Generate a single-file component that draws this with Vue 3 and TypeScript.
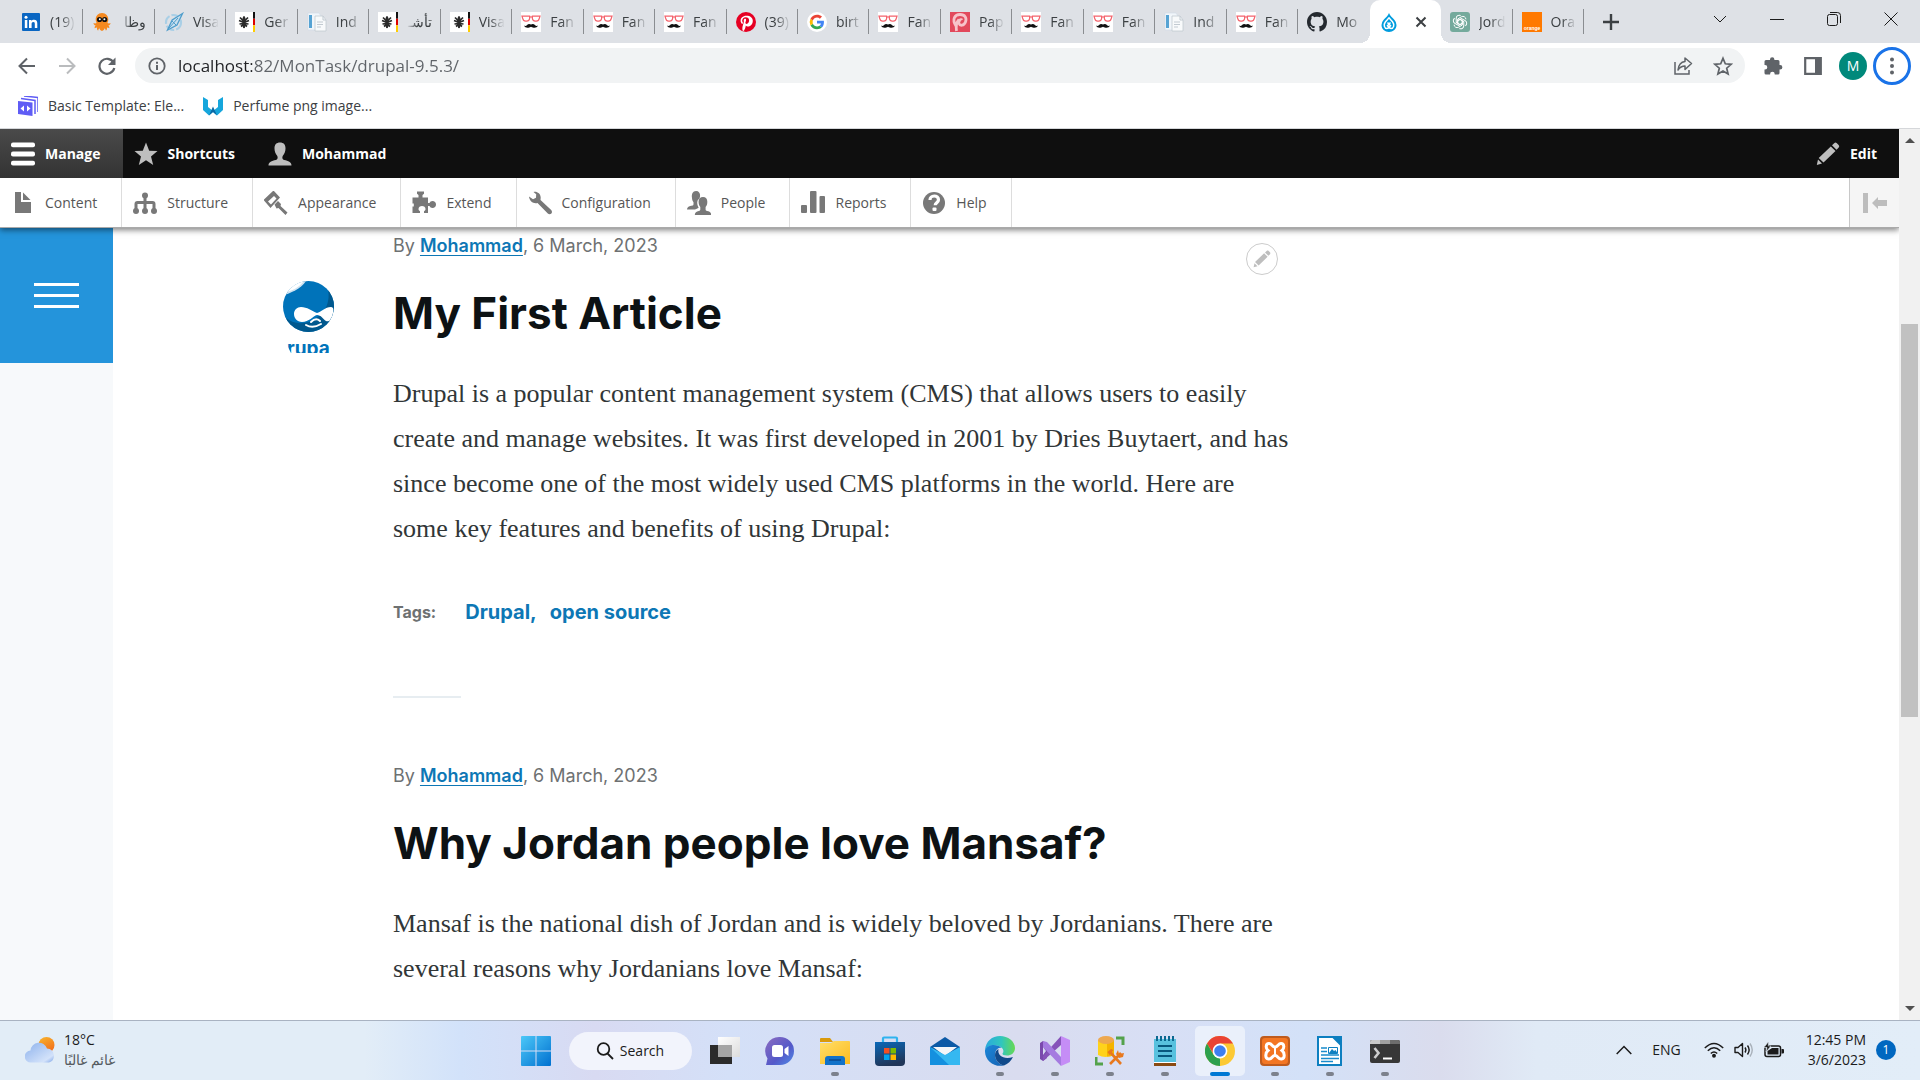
<script setup lang="ts">
import { ref } from 'vue'

interface Tab {
  icon: string
  label: string
  rtl?: boolean
  active?: boolean
}

interface MenuItem {
  icon: string
  label: string
}

interface TaskApp {
  icon: string
  label: string
  state?: 'open' | 'current'
}

interface Article {
  author: string
  date: string
  title: string
  lines: string[]
  tags: string[]
  avatar: boolean
}

const url = ref('localhost:82/MonTask/drupal-9.5.3/')

const tabs: Tab[] = [
  { icon: 'linkedin', label: '(19)' },
  { icon: 'octopus', label: 'وظا', rtl: true },
  { icon: 'compass', label: 'Visa' },
  { icon: 'german', label: 'Ger' },
  { icon: 'document', label: 'Ind' },
  { icon: 'german', label: 'تأشـ', rtl: true },
  { icon: 'german', label: 'Visa' },
  { icon: 'fancy', label: 'Fan' },
  { icon: 'fancy', label: 'Fan' },
  { icon: 'fancy', label: 'Fan' },
  { icon: 'pinterest', label: '(39)' },
  { icon: 'google', label: 'birt' },
  { icon: 'fancy', label: 'Fan' },
  { icon: 'paper', label: 'Pap' },
  { icon: 'fancy', label: 'Fan' },
  { icon: 'fancy', label: 'Fan' },
  { icon: 'document', label: 'Ind' },
  { icon: 'fancy', label: 'Fan' },
  { icon: 'github', label: 'Mo' },
  { icon: 'drop', label: '', active: true },
  { icon: 'gpt', label: 'Jord' },
  { icon: 'orange', label: 'Ora' },
]

const menu: MenuItem[] = [
  { icon: 'content', label: 'Content' },
  { icon: 'structure', label: 'Structure' },
  { icon: 'appearance', label: 'Appearance' },
  { icon: 'extend', label: 'Extend' },
  { icon: 'config', label: 'Configuration' },
  { icon: 'people', label: 'People' },
  { icon: 'reports', label: 'Reports' },
  { icon: 'help', label: 'Help' },
]

const apps: TaskApp[] = [
  { icon: 'taskview', label: 'Task view' },
  { icon: 'chat', label: 'Chat' },
  { icon: 'explorer', label: 'File Explorer', state: 'open' },
  { icon: 'store', label: 'Store' },
  { icon: 'mail', label: 'Mail' },
  { icon: 'edge', label: 'Edge', state: 'open' },
  { icon: 'vs', label: 'Visual Studio', state: 'open' },
  { icon: 'sql', label: 'Database tools', state: 'open' },
  { icon: 'notepad', label: 'Notepad', state: 'open' },
  { icon: 'chrome', label: 'Chrome', state: 'current' },
  { icon: 'xampp', label: 'XAMPP', state: 'open' },
  { icon: 'writer', label: 'Writer', state: 'open' },
  { icon: 'terminal', label: 'Terminal', state: 'open' },
]

const articles: Article[] = [
  {
    author: 'Mohammad',
    date: '6 March, 2023',
    title: 'My First Article',
    lines: [
      'Drupal is a popular content management system (CMS) that allows users to easily',
      'create and manage websites. It was first developed in 2001 by Dries Buytaert, and has',
      'since become one of the most widely used CMS platforms in the world. Here are',
      'some key features and benefits of using Drupal:',
    ],
    tags: ['Drupal', 'open source'],
    avatar: true,
  },
  {
    author: 'Mohammad',
    date: '6 March, 2023',
    title: 'Why Jordan people love Mansaf?',
    lines: [
      'Mansaf is the national dish of Jordan and is widely beloved by Jordanians. There are',
      'several reasons why Jordanians love Mansaf:',
    ],
    tags: [],
    avatar: false,
  },
]

// Favicons, drawn on a 20 x 20 grid
const favicons: Record<string, string> = {
  linkedin:
    '<rect width="18" height="18" x="1" y="1" rx="1" fill="#0a66c2"/><circle cx="5" cy="5.2" r="1.5" fill="#fff"/><path d="M3.8 8h2.5v8H3.8zM8 8h2.4v1.1c.5-.8 1.400-1.300 2.600-1.300 2.600 0 3.300 1.600 3.300 4V16h-2.500v-3.900c0-1.100-.2-2-1.400-2-1.300 0-1.800.9-1.800 2.100V16H8z" fill="#fff"/>',
  octopus:
    '<path d="M10 1C6 1 3.600 4 3.700 7.500c0 1.500.5 2.500.9 3.500-1 .6-2.300.5-3.100 0 0 1.500 1 2.300 2.200 2.300-1 .8-1.200 1.900-1 3 .6-.6 1.600-.8 2.400-.9-.4 1.400.2 2.600 1.200 3.200 0-1 .5-1.800 1.200-2.300.2 1.300 1.100 2.300 2.500 2.700 1.400-.4 2.300-1.400 2.500-2.700.7.5 1.200 1.300 1.200 2.300 1-.6 1.600-1.800 1.200-3.200.8.1 1.800.3 2.400.9.2-1.100 0-2.200-1-3 1.200 0 2.200-.8 2.200-2.300-.8.5-2.100.6-3.100 0 .4-1 .9-2 .9-3.500C16.400 4 14 1 10 1z" fill="#f5891f"/><circle cx="7.500" cy="7.500" r="2.600" fill="#111"/><circle cx="12.700" cy="7.500" r="2.600" fill="#111"/><circle cx="7.800" cy="7.300" r="1" fill="#fff"/><circle cx="12.400" cy="7.300" r="1" fill="#fff"/>',
  compass:
    '<circle cx="9.500" cy="10.500" r="7.500" fill="none" stroke="#a9cfe6" stroke-width="2.200" stroke-dasharray="9 2"/><path d="M19 1 12.500 14.500 3 18.500 7.500 7z" fill="#c9e0ee"/><path d="M18.500 1.500 8.200 8 3.500 18 13 13z" fill="none" stroke="#4f9dcb" stroke-width="1.300"/><path d="m5 16 9-10M8 9l4 4" stroke="#4f9dcb" stroke-width="1"/>',
  german:
    '<path fill="#fff" d="M0 0h20v20H0z"/><path fill="#111" d="M18 0h2v6.700h-2z"/><path fill="#d00" d="M18 6.700h2v6.600h-2z"/><path fill="#fc0" d="M18 13.300h2V20h-2z"/><path d="M9 4.500V16M9 9.500 5 5.500M9 10.500 4 8.500M9 11.500l-4.500.5M9 12l-3 2.500M9 9.500l4-4M9 10.500l5-2M9 11.500l4.500.5M9 12l3 2.500" stroke="#2a2a2a" stroke-width="1.700"/><path d="M7.500 6 9 4l1.500 2v8L9 16.500 7.500 14z" fill="#2a2a2a"/>',
  document:
    '<path d="M1 1h11l2 3v14H1z" fill="#f1f6fa" stroke="#d3dde6" stroke-width=".7"/><path d="M2 3h3v13H2z" fill="#56a3d3"/><path d="M8 4h8l3 4v11H8z" fill="#f8fafb" stroke="#c2cad1" stroke-width=".8"/><path d="M10 10h6M10 12.500h6M10 15h4M16 4v4h3" fill="none" stroke="#c2cad1"/>',
  fancy:
    '<path fill="#fff" d="M0 0h20v20H0z"/><path d="M1 4.200h7.600v2.500a3 3 0 0 1-3 2.400H4.800A3 3 0 0 1 1.800 6.700zM11.400 4.200H19l-.8 2.500a3 3 0 0 1-3 2.400h-.8a3 3 0 0 1-3-2.400zM8.600 5.300q1.400-1 2.800 0" fill="none" stroke="#f4636c" stroke-width="1.200"/><path d="M10 12.600c-1.400-1.100-3-.7-3.900.4-.8 1-2.100 1.200-3.100.6.700 1.800 2.500 2.300 4.300 2.100 1.300-.1 2.300-.5 2.700-.9.400.4 1.400.8 2.700.9 1.800.2 3.600-.3 4.300-2.100-1 .6-2.300.4-3.100-.6-.9-1.100-2.500-1.500-3.900-.4z" fill="#111"/>',
  pinterest:
    '<circle cx="10" cy="10" r="10" fill="#e60023"/><path d="M10.400 3.700c-3.700 0-5.800 2.400-5.800 5 0 1.200.6 2.700 1.700 3.200.2.100.3 0 .3-.1l.3-1.100c0-.1 0-.2-.1-.3-.4-.4-.6-1.100-.6-1.800 0-1.700 1.300-3.400 3.600-3.400 1.900 0 3.300 1.300 3.300 3.100 0 2.100-1.100 3.600-2.500 3.600-.8 0-1.400-.6-1.200-1.400.2-.9.700-1.900.7-2.600 0-1.600-2.400-1.400-2.400.8 0 .7.200 1.100.2 1.100L6.500 14.700c-.3 1.400 0 3.400.1 3.700.6.300 1.200.5 1.200.5.300-.5 1.200-2 1.500-3.200l.6-2.200c.3.600 1.200 1.100 2.100 1.100 2.800 0 4.800-2.600 4.800-5.800 0-3-2.500-5.100-6.400-5.100z" fill="#fff"/>',
  google:
    '<circle cx="10" cy="10" r="10" fill="#fff"/><path d="M16.900 8.800H10v2.700h4a3.700 3.700 0 0 1-1.500 2.300l2.300 1.800c1.500-1.400 2.400-3.400 2.100-6.800z" fill="#4285f4"/><path d="M10 17.200c1.900 0 3.600-.6 4.800-1.600l-2.300-1.800c-1.800 1.200-5.500.9-6.600-2.100L3.500 13.500c1.200 2.300 3.700 3.700 6.500 3.700z" fill="#34a853"/><path d="M5.900 11.700a4.600 4.600 0 0 1 0-3.100L3.500 6.700a7.300 7.300 0 0 0 0 6.800z" fill="#fbbc05"/><path d="M10 5.600c1.100 0 2.100.4 2.900 1.100L15 4.600C11.500 1.400 5.800 2.200 3.500 6.700l2.400 1.900C6.500 6.800 8.100 5.600 10 5.600z" fill="#ea4335"/>',
  paper:
    '<path fill="#e2495c" d="M0 0h20v20H0z"/><path d="M6.500 19c-1-7 .6-9.500 2.500-11.500M6 14C1.500 7 5 2.500 10 2.500S17 6 15.500 10s-5.500 4-6.500 1.500S11 6.500 12 8" fill="none" stroke="#f7c3ca" stroke-width="2.800"/>',
  github:
    '<path transform="scale(1.250)" d="M8 0C3.580 0 0 3.580 0 8c0 3.540 2.290 6.530 5.470 7.590.4.070.55-.17.55-.38 0-.19-.01-.82-.01-1.490-2.010.37-2.530-.49-2.690-.94-.09-.23-.48-.94-.82-1.130-.28-.15-.68-.52-.01-.53.63-.01 1.080.58 1.230.82.720 1.210 1.870.87 2.330.66.070-.52.280-.87.510-1.070-1.780-.2-3.640-.89-3.640-3.950 0-.87.310-1.590.820-2.150-.08-.2-.36-1.020.08-2.120 0 0 .67-.21 2.200.82.640-.18 1.320-.27 2-.27s1.360.09 2 .27c1.530-1.040 2.200-.82 2.200-.82.440 1.100.16 1.920.08 2.120.510.560.820 1.270.820 2.150 0 3.070-1.870 3.750-3.650 3.950.290.250.540.730.540 1.480 0 1.070-.01 1.930-.01 2.200 0 .21.150.460.550.380A8.010 8.010 0 0 0 16 8c0-4.420-3.580-8-8-8z" fill="#24292f"/>',
  drop:
    '<path d="M10 1C11 3.800 13.500 5.800 15.500 8a7.800 7.800 0 0 1 2 5c0 4-3.400 7-7.500 7s-7.500-3-7.500-7a7.800 7.800 0 0 1 2-5C6.500 5.800 9 3.800 10 1z" fill="#009cde"/><path d="M10 5.500C11 7.500 12.500 8.500 13.500 9.800 16 13 14.500 16.500 12 16.500c-1.200 0-2.300-1.500-3.500-2.700L11.500 10.500M10 5.500c-1 2-2.500 3-3.500 4.300C4 13 5.500 16.500 8 16.500c1.200 0 2.300-1.500 3.500-2.700L8.500 10.500" fill="none" stroke="#fff" stroke-width="1.500"/>',
  gpt:
    '<rect width="20" height="20" rx="3" fill="#74aa9c"/><g fill="none" stroke="#fff" stroke-width="1"><path id="petal" d="M10 7.400 12.300 8.700V13L8.600 15.200a3 3 0 0 1-4.500-2.500"/><use href="#petal" transform="rotate(60 10 10)"/><use href="#petal" transform="rotate(120 10 10)"/><use href="#petal" transform="rotate(180 10 10)"/><use href="#petal" transform="rotate(240 10 10)"/><use href="#petal" transform="rotate(300 10 10)"/></g>',
  orange:
    '<path fill="#ff7900" d="M0 0h20v20H0z"/><text x="10" y="18" text-anchor="middle" font-family="Liberation Sans, sans-serif" font-weight="700" font-size="5" fill="#fff">orange</text>',
}

// Admin menu glyphs, drawn on a 24 x 24 grid
const glyphs: Record<string, string> = {
  content: '<path d="M4 1h6v10h10v11H4z"/><path d="M12 1.500 19.500 9H12z"/>',
  structure:
    '<circle cx="12" cy="4.500" r="3"/><circle cx="3" cy="20" r="3"/><circle cx="12" cy="20" r="3"/><circle cx="21" cy="20" r="3"/><path d="M12 5v14M3 19v-6q0-1.500 1.500-1.500h15Q21 11.500 21 13v6" fill="none" stroke="currentColor" stroke-width="3"/>',
  appearance:
    '<path d="M9.500-.5 16 6.500 6.500 17-.5 9zM10 5 4 10.500 7 13.500 12.500 7.500z" fill-rule="evenodd"/><path d="m10.500 13.500 3.500-3.500 3 3-.5 2 7 6.500-2 2.500-7-7-2 .5z"/>',
  extend:
    '<path d="M5 .5h7v2.200L10.500 4v2.500H16V12h1.500c.5-1.200 1.500-2 3-2 2 0 3.500 1.500 3.500 3.500S22.500 17 20.500 17c-1.500 0-2.500-.8-3-2H16v7h-4v-1.800c1-.4 1.500-1.200 1.500-2.200 0-1.800-1.500-3-3.500-3s-3.500 1.200-3.500 3c0 1 .5 1.800 1.500 2.200V22H.5v-6.500h1.300v-3H.5v-6H6.500V4L5 2.700z"/>',
  config:
    '<path d="M1 5.500 5 8.200l3-1.500.2-3.400L5.500 1C9 .2 12.500 2.500 12.700 6.500L12.500 9l10.700 10c1 1.200 1 2.500.2 3.500-1 1-2.500 1-3.600 0L9.500 12c-4 1-8-1.500-8.500-6.500z"/>',
  people:
    '<path d="M9 0c2.800 0 4.300 2 4.100 5-.1 1-.4 1.500-.6 2.500-1.800.9-2.500 3-2.200 5.300.2 1.700.7 2.600 1.400 3.800-.5.7-2 1.300-3.700 1.900H0c0-2.500 2-3.300 5.500-4 .8-.2 1-.8 1-1.600v-1.600C5.500 10 5 8.500 5 7c-.6-3.800.8-7 4-7z"/><path d="M16 6c3 0 4.500 2 4.300 5.200 0 2-.6 3.500-1.700 4.800v2.500c0 .8.500 1.200 1.500 1.500 2.500.5 4.200 1.500 4.200 4H7.800c0-2.500 1.700-3.500 4-4 1-.3 1.500-.7 1.500-1.500V16c-1-1.300-1.600-2.800-1.700-4.800C11.400 8 13 6 16 6z"/>',
  reports:
    '<rect x="0" y="14" width="6" height="8" rx="1"/><rect x="9" y="0" width="6.500" height="22" rx="1"/><rect x="18.500" y="5" width="5.500" height="17" rx="1"/>',
  help: '<circle cx="12" cy="12" r="11"/><path d="M8 9c0-2.400 1.700-4 4.200-4s4.300 1.500 4.300 3.700c0 3-3.300 3-3.300 5.500" fill="none" stroke="#fff" stroke-width="3.200"/><rect x="10.500" y="16.500" width="4" height="3.500" rx="1" fill="#fff"/>',
  star: '<path d="m12 .5 3.200 8.200 8.300.4-6.500 5.300 2.200 8.600L12 18.200 4.800 23 7 14.400.5 9.100l8.300-.4z"/>',
  user: '<path d="M12 .5c3.500 0 5.600 2 5.500 6 0 3-1 5-2.800 7.500-.8 1.500-.3 3.500 1.500 4 4 .8 7.300 2 7.300 5.500H.5C.5 20 3.800 18.800 7.800 18c1.800-.5 2.300-2.500 1.500-4C7.500 11.500 6.500 9.500 6.500 6.500c-.1-4 2-6 5.500-6z"/>',
  pencil:
    '<path d="M18.200 1.200c.8-.8 1.600-.9 2.400-.1l2 2c.8.900.8 1.600.1 2.400l-2.200 2.300-4.500-4.500z"/><path d="m14.800 4.400 4.700 4.700L7.500 20.500l-4.800-4.600zM2 17.500l4 4L.8 23z"/>',
}

// Taskbar pictures, drawn on a 30 x 30 grid
const appIcons: Record<string, string> = {
  taskview:
    '<defs><linearGradient id="tvw" x2="1" y2="1"><stop stop-color="#fff"/><stop offset="1" stop-color="#dcdcdc"/></linearGradient></defs><path d="M0 9h22v19H0z" fill="#2b2b2b"/><path d="M8 1h22v20H8z" fill="url(#tvw)"/><path d="M8 9h14v12H8z" fill="#a5a5a5"/>',
  chat:
    '<defs><linearGradient id="cht" x2="1" y2="1"><stop stop-color="#8d6cc0"/><stop offset=".6" stop-color="#5459c9"/><stop offset="1" stop-color="#4f8ce8"/></linearGradient></defs><path d="M15 1a14 14 0 1 1 0 28H1l1.500-6.500A14 14 0 0 1 15 1z" fill="url(#cht)"/><rect x="7" y="9" width="11" height="12" rx="2.500" fill="#fff"/><path d="m19.500 13 4-3v10l-4-3z" fill="#fff"/>',
  explorer:
    '<defs><linearGradient id="exp" x2="1" y2="1"><stop stop-color="#ffdf6a"/><stop offset="1" stop-color="#fdbb1f"/></linearGradient></defs><path d="M1 2h9l3 4H0V3q0-1 1-1z" fill="#d99a0c"/><path d="M0 7h11l3-2h15q1 0 1 1v22H0z" fill="url(#exp)"/><path d="M5 29v-6q0-3 3-3h14q3 0 3 3v6z" fill="#1272c8"/><path d="M9 24h12" stroke="#0b4a8e" stroke-width="1.500"/>',
  store:
    '<defs><linearGradient id="sto" y2="1" x2=".3"><stop stop-color="#0a68b8"/><stop offset="1" stop-color="#203659"/></linearGradient></defs><path d="M8 7V2.500Q8 1.500 9 1.500h12q1 0 1 1V7" fill="none" stroke="#2fb3ef" stroke-width="2.200"/><path d="M0 6h30v20q0 4-4 4H4q-4 0-4-4z" fill="url(#sto)"/><path d="M9 12h5.500v5.500H9z" fill="#f25022"/><path d="M15.500 12H21v5.500h-5.500z" fill="#7fba00"/><path d="M9 18.500h5.500V24H9z" fill="#00a4ef"/><path d="M15.500 18.500H21V24h-5.500z" fill="#ffb900"/>',
  mail:
    '<path d="M0 11 15 1l15 10v10H0z" fill="#0c5aa6"/><path d="M3 11h24L15 20z" fill="#f4f6f8"/><path d="M0 11 15 19 30 11v18H0z" fill="#35b8f1"/><path d="M0 11 19 29H0z" fill="#1490df"/>',
  edge:
    '<defs><linearGradient id="edg" x2="1"><stop stop-color="#2aa8de"/><stop offset=".55" stop-color="#30c6bd"/><stop offset="1" stop-color="#67d951"/></linearGradient><linearGradient id="edb" y2="1"><stop stop-color="#1b86d8"/><stop offset="1" stop-color="#1763b4"/></linearGradient></defs><path d="M0 14C1 5 7 0 15 0s15 5.500 15 12c0 5-4 7.500-8 7.500-3 0-5-1-4.500-2 1.500-1.500 1-4-.5-5.500C13 8 3 8 0 14z" fill="url(#edg)"/><path d="M0 14c3-6.500 12-6 16.500-2.500-4 0-6.500 3-6.500 7.500 0 5 4 9.500 9 10.500C8 31.500-.5 24 0 14z" fill="url(#edb)"/><path d="M10 19c0-3 1.500-5 3.500-6-1.500 7 6 11 14.500 8-2 4-5 7-9 8.500-5-1-9-5.500-9-10.500z" fill="#114a8b"/>',
  vs:
    '<path d="M21 0 30 4v22l-9 4z" fill="#c58df6"/><path d="m0 7 3-2 4 3v14l-4 3-3-2z" fill="#7a49ad"/><path d="M3 25 21 9V0L3 20z" fill="#8653b9"/><path d="M3 5v6l18 19v-9L7 6z" fill="#a57be0"/><path d="M3 11l3 4-3 4z" fill="#d6daf2"/>',
  sql:
    '<path d="M3 4v15q7 4 16 0V4z" fill="#ffd21c"/><path d="M12 4h7v15q-3 1.500-7 1.600z" fill="#f5b400"/><ellipse cx="11" cy="4" rx="8" ry="4" fill="#eda850"/><path d="M21 2h7v7M1 21v7h7" fill="none" stroke="#54a24c" stroke-width="3"/><path d="m15 16 11 12M26 17 15 28" stroke="#e8781e" stroke-width="2.600"/><path d="m12.500 16 3.500-3 2.500 1-4 5zM23 14l1 4 5-1-1 4-4 1-3-4z" fill="#e8781e"/>',
  notepad:
    '<path d="M4 3h22v24H4z" fill="#58c1de"/><path d="M4 27h22v3H4z" fill="#8a4a12"/><path d="M4 26h22v1H4z" fill="#fff"/><path d="M8 10h14M8 15h14M8 20h14" stroke="#08587e" stroke-width="2"/><path d="M7 0v5M11 0v5M15 0v5M19 0v5M23 0v5" stroke="#0c6890" stroke-width="2"/>',
  chrome:
    '<circle cx="15" cy="15" r="15" fill="#fcc934"/><path d="M2 7.500A15 15 0 0 1 28 7.500H15L9 18.700z" fill="#ea4335"/><path d="M2 7.500 8.500 18.700 15 22.500 15 30A15 15 0 0 1 2 7.500z" fill="#2da04e"/><path d="M15 30l6.500-11.300L21 15h-6z" fill="#fcc934"/><circle cx="15" cy="15" r="7.400" fill="#fff"/><circle cx="15" cy="15" r="5.800" fill="#3f7ff0"/>',
  xampp:
    '<rect width="30" height="30" rx="4" fill="#bf5b1d"/><rect x="2" y="2" width="26" height="26" rx="3" fill="#f37623"/><path d="M9 7.500c-3.500 0-3.500 5-1 7-2.500 2-3.500 8 .5 8.500 3.500.5 3.500-3.500 6.500-3.500s3 4 6.500 3.500c4-.5 3-6.500.5-8.500 2.500-2 2.500-7-1-7-3 0-3 3.500-6 3.500s-3-3.500-6-3.500z" fill="none" stroke="#fff" stroke-width="3"/><path d="M15 11v9" stroke="#fff" stroke-width="2"/>',
  writer:
    '<path d="M3 1h15l8 8v20H3z" fill="#fff" stroke="#0d7fc0" stroke-width="2"/><path d="M17 0h10v10z" fill="#0d7fc0"/><path d="M6 12h6M6 15.500h6M6 19h18M6 22.500h18M6 25.500h12" stroke="#1a8ccc" stroke-width="1.500"/><path d="M13.500 11.500h9v6h-9z" fill="#fff" stroke="#0d7fc0"/><path d="m14 17 3-4 2 2 1.500-1 2 3z" fill="#0d7fc0"/>',
  terminal:
    '<path d="M0 6q0-2 2-2h26q2 0 2 2v19q0 2-2 2H2q-2 0-2-2z" fill="#373737"/><path d="M0 8V6q0-2 2-2h8v4z" fill="#c8c8c8"/><path d="M10 4h10v4H10z" fill="#a0a0a0"/><path d="M20 4h8q2 0 2 2v2H20z" fill="#6d6d6d"/><path d="m4.500 12 4 5-4 5" fill="none" stroke="#ccc" stroke-width="2.600"/><path d="M13 22.500h9" stroke="#fff" stroke-width="2"/>',
}
</script>

<template>
  <div class="screen">
    <header class="browser">
      <div class="strip">
        <nav class="tabs" aria-label="Tabs">
          <div v-for="(tab, i) in tabs" :key="i" class="tab" :class="{ active: tab.active, rtl: tab.rtl, before: tabs[i + 1]?.active }">
            <svg class="favicon" viewBox="0 0 20 20" v-html="favicons[tab.icon]"></svg>
            <button v-if="tab.active" class="close-tab" aria-label="Close tab">
              <svg viewBox="0 0 12 12" width="12" height="12"><path d="m1.500 1.500 9 9m0-9-9 9" stroke="#3c4043" stroke-width="2" /></svg>
            </button>
            <span v-else class="tab-label">{{ tab.label }}</span>
          </div>
        </nav>
        <button class="new-tab" aria-label="New tab">
          <svg viewBox="0 0 16 16" width="16" height="16"><path d="M8 0v16M0 8h16" stroke="#3c4043" stroke-width="2.400" /></svg>
        </button>
        <div class="window-controls">
          <button aria-label="Search tabs"><svg viewBox="0 0 14 14" width="14" height="14"><path d="m1 4 6 6 6-6" /></svg></button>
          <button aria-label="Minimize"><svg viewBox="0 0 14 14" width="14" height="14"><path d="M0 7.500h14" /></svg></button>
          <button aria-label="Restore">
            <svg viewBox="0 0 14 14" width="14" height="14"><rect x=".5" y="2.500" width="10" height="11" rx="2" /><path d="M3 .5h7.500q3 0 3 3V11" /></svg>
          </button>
          <button aria-label="Close"><svg viewBox="0 0 14 14" width="14" height="14"><path d="m.5.500 13 13m0-13-13 13" /></svg></button>
        </div>
      </div>

      <div class="toolbar">
        <button class="tool" aria-label="Back">
          <svg viewBox="0 0 18 18" width="18" height="18"><path d="M17 9H2m7-7.500L1.500 9 9 16.500" fill="none" stroke="#5f6368" stroke-width="2" /></svg>
        </button>
        <button class="tool" aria-label="Forward">
          <svg viewBox="0 0 18 18" width="18" height="18"><path d="M1 9h15M9 1.500 16.500 9 9 16.500" fill="none" stroke="#babcbe" stroke-width="2" /></svg>
        </button>
        <button class="tool" aria-label="Reload">
          <svg viewBox="0 0 18 18" width="18" height="18"><path d="M15.500 5.500A7.500 7.500 0 1 0 16.300 11" fill="none" stroke="#5f6368" stroke-width="2.200" /><path d="M17.500.500v7.500H10z" fill="#5f6368" /></svg>
        </button>
        <div class="omnibox">
          <svg viewBox="0 0 18 18" width="18" height="18"><circle cx="9" cy="9" r="7.700" fill="none" stroke="#5f6368" stroke-width="1.800" /><path d="M9 8v5M9 4.800v2" stroke="#5f6368" stroke-width="2" /></svg>
          <input v-model="url" aria-label="Address" type="text" spellcheck="false" />
          <button aria-label="Share">
            <svg viewBox="0 0 20 20" width="20" height="20" fill="none" stroke="#5f6368" stroke-width="1.500"><path d="M2 6v12h14v-4" /><path d="M12 2v3.500C7 6 5.500 9.500 5 14c2-3 4-4 7-4v3.500l6.500-6z" stroke-linejoin="round" /></svg>
          </button>
          <button aria-label="Bookmark">
            <svg viewBox="0 0 20 20" width="20" height="20"><path d="m10 2.300 2.300 5.500 5.900.5-4.500 3.900 1.400 5.800L10 14.900 4.900 18l1.400-5.800-4.500-3.900 5.900-.5z" fill="none" stroke="#5f6368" stroke-width="1.700" /></svg>
          </button>
        </div>
        <button class="tool" aria-label="Extensions">
          <svg viewBox="0 0 20 20" width="20" height="20"><path d="M7 3.500a2.200 2.200 0 0 1 4.400 0V4H15q1.500 0 1.500 1.500V9h.6a2.300 2.300 0 0 1 0 4.600h-.6V17q0 1.500-1.500 1.500h-3.300V18a2.300 2.300 0 0 0-4.600 0v.5H3q-1.500 0-1.500-1.500v-3.400H2a2.300 2.300 0 0 0 0-4.600h-.5V5.500Q1.500 4 3 4h4z" fill="#5f6368" /></svg>
        </button>
        <button class="tool" aria-label="Side panel">
          <svg viewBox="0 0 18 18" width="18" height="18"><path d="M1.200 1.200h15.600v15.600H1.200z" fill="none" stroke="#5f6368" stroke-width="2.200" /><path d="M11 1h6v16h-6z" fill="#5f6368" /></svg>
        </button>
        <button class="tool profile" aria-label="Profile"><span>M</span></button>
        <button class="tool more" aria-label="More">
          <svg viewBox="0 0 18 18" width="18" height="18" fill="#5f6368"><circle cx="9" cy="2.500" r="2" /><circle cx="9" cy="9" r="2" /><circle cx="9" cy="15.500" r="2" /></svg>
        </button>
      </div>

      <div class="bookmarks">
        <a href="#">
          <svg viewBox="0 0 20 20" width="20" height="20"><path d="M6 0 20 1.500V16M3 2.500l14 2V18" fill="none" stroke="#5f5cf5" stroke-width="1.500" /><path d="m0 5 14.500 1.500V20L0 18z" fill="#5f5cf5" /><path d="m6 9.500-3.500 3 3.500 3zM9 9.500l3.500 3-3.500 3z" fill="#fff" /></svg>
          <span>Basic Template: Ele...</span>
        </a>
        <a href="#">
          <svg viewBox="0 0 20 20" width="20" height="20"><path d="m0 1 5 3v7l5 4 5-4V4l5-3v13l-6 5.500-4-3.500-4 3.500L0 14z" fill="#16a6dc" /><path d="m6 19.500 4-9 4 9-4-3.500z" fill="#0a6aa6" /></svg>
          <span>Perfume png image...</span>
        </a>
      </div>
    </header>

    <div class="viewport">
      <div class="page">
        <div class="admin">
          <nav class="admin-bar" aria-label="Administration">
            <a href="#" class="current">
              <svg viewBox="0 0 25 24" fill="#fff"><rect width="25" height="5" rx="2" /><rect y="9.500" width="25" height="5" rx="2" /><rect y="19" width="25" height="5" rx="2" /></svg>
              Manage
            </a>
            <a href="#"><svg viewBox="0 0 24 24" v-html="glyphs.star"></svg>Shortcuts</a>
            <a href="#"><svg viewBox="0 0 24 24" v-html="glyphs.user"></svg>Mohammad</a>
            <a href="#" class="edit"><svg viewBox="0 0 24 24" v-html="glyphs.pencil"></svg>Edit</a>
          </nav>
          <nav class="admin-tray" aria-label="Manage">
            <a v-for="item in menu" :key="item.label" href="#">
              <svg viewBox="0 0 24 24" v-html="glyphs[item.icon]"></svg>{{ item.label }}
            </a>
            <button class="orientation" aria-label="Vertical orientation">
              <svg viewBox="0 0 24 20" width="24" height="20" fill="#bdbdbd"><path d="M0 0h5v20H0zM9 10l6-6v3h9v6h-9v3z" /></svg>
            </button>
          </nav>
        </div>

        <div class="site">
          <aside class="side">
            <button class="burger" aria-label="Main menu"><span></span><span></span><span></span></button>
          </aside>
          <main class="feed">
            <article v-for="post in articles" :key="post.title" class="post">
              <div class="avatar">
                <svg v-if="post.avatar" viewBox="0 0 51 72" width="51" height="72" role="img" aria-label="Drupal">
                  <defs>
                    <clipPath id="ball"><circle cx="25.500" cy="25.500" r="25.500" /></clipPath>
                    <clipPath id="word"><path d="M3 62h47v5l-4 5H8z" /></clipPath>
                  </defs>
                  <g clip-path="url(#ball)">
                    <path d="M0 0h51v51H0z" fill="#0073ba" />
                    <path d="M45 8c3 16-5 27-19 33C15 44 6 41 0 34v17h51V8z" fill="#00588e" />
                    <path d="M-2 14C4 14 20 8 24-2H-2z" fill="#cfe3f1" />
                    <path d="M0 11C6 12 18 6 22-2H0z" fill="#fff" />
                    <path d="M18 26c6 0 11 4 16 6 4-1 8-6 14-6 3 0 3 4 2 9-1 4-4 6-7 5-3-2-5-6-9-6-4 1-8 7-15 7-5 0-8-4-8-8 0-4 3-7 7-7z" fill="#fff" />
                    <path d="M23 44c5 3 10 2 15-1M28 41c3-3 6-4 9-1" fill="none" stroke="#fff" stroke-width="2" stroke-linecap="round" />
                  </g>
                  <text x="4" y="74" clip-path="url(#word)" font-family="Inter, sans-serif" font-weight="700" font-size="19" fill="#0073ba">rupa</text>
                </svg>
              </div>
              <div class="body">
                <button v-if="post.avatar" class="quick-edit" aria-label="Edit article">
                  <svg viewBox="0 0 24 24" width="18" height="18" v-html="glyphs.pencil"></svg>
                </button>
                <p class="byline">By <a href="#">{{ post.author }}</a>, {{ post.date }}</p>
                <h2>{{ post.title }}</h2>
                <p class="text">
                  <template v-for="(line, i) in post.lines" :key="i"><br v-if="i" />{{ line }}</template>
                </p>
                <div v-if="post.tags.length" class="tags">
                  <span class="tags-label">Tags:</span>
                  <span v-for="(tag, i) in post.tags" :key="tag"><a href="#">{{ tag }}</a><template v-if="i < post.tags.length - 1">,</template></span>
                </div>
                <hr v-if="post.tags.length" />
              </div>
            </article>
          </main>
        </div>
      </div>
      <div class="scrollbar" aria-hidden="true">
        <i class="arrow up"></i>
        <i class="thumb"></i>
        <i class="arrow down"></i>
      </div>
    </div>

    <footer class="taskbar">
      <div class="weather">
        <svg viewBox="0 0 31 26" width="31" height="26">
          <defs>
            <linearGradient id="sun" x2=".5" y2="1"><stop stop-color="#f8b62d" /><stop offset="1" stop-color="#f2701c" /></linearGradient>
            <linearGradient id="cloud" y2="1"><stop stop-color="#8db2ec" /><stop offset=".8" stop-color="#d3e2fa" /><stop offset="1" stop-color="#7ca3e6" /></linearGradient>
          </defs>
          <circle cx="21.500" cy="8" r="8" fill="url(#sun)" />
          <path d="M6 25.500a6 6 0 0 1-.5-12A8.500 8.500 0 0 1 22 11.500a7.200 7.200 0 0 1 2 14z" fill="url(#cloud)" />
        </svg>
        <div>
          <span>18°C</span>
          <span class="condition" dir="rtl">غائم غالبًا</span>
        </div>
      </div>

      <div class="dock">
        <button class="app" aria-label="Start">
          <svg viewBox="0 0 30 30"><defs><linearGradient id="win" x2="1" y2="1"><stop stop-color="#4cc8f8" /><stop offset="1" stop-color="#0070d0" /></linearGradient></defs><path d="M1 0h13.500v14.500H0V1q0-1 1-1zM15.500 0H29q1 0 1 1v13.500H15.500zM0 15.500h14.500V30H1q-1 0-1-1zM15.500 15.500H30V29q0 1-1 1H15.500z" fill="url(#win)" /></svg>
        </button>
        <button class="search">
          <svg viewBox="0 0 18 18" width="18" height="18"><circle cx="7.500" cy="7" r="5.800" fill="none" stroke="#1b1b1b" stroke-width="1.800" /><path d="m11.500 11.500 5.500 5.500" stroke="#1b1b1b" stroke-width="1.800" /></svg>
          Search
        </button>
        <button v-for="app in apps" :key="app.label" class="app" :class="app.state" :aria-label="app.label">
          <svg viewBox="0 0 30 30" v-html="appIcons[app.icon]"></svg>
        </button>
      </div>

      <div class="tray">
        <button class="chevron" aria-label="Hidden icons"><svg viewBox="0 0 16 10" width="16" height="10"><path d="m.7 9 7.300-7.500L15.300 9" fill="none" stroke="#1b1b1b" stroke-width="1.500" /></svg></button>
        <button class="lang">ENG</button>
        <button class="status" aria-label="Network, sound and battery">
          <svg viewBox="0 0 20 16" width="20" height="16" fill="none" stroke="#1b1b1b" stroke-width="1.500"><path d="M.8 6q9.200-9 18.400 0M3.800 8.800q6.200-6 12.400 0M6.800 11.500q3.200-3 6.400 0" /><circle cx="10" cy="13.700" r="1.200" fill="#1b1b1b" /></svg>
          <svg viewBox="0 0 20 16" width="20" height="16" fill="none" stroke="#1b1b1b" stroke-width="1.400"><path d="M1 5.500h3L8.500 1.500v13L4 10.500H1z" stroke-linejoin="round" /><path d="M11 5.500q1.800 2.500 0 5M13.500 3.500q3.300 4.500 0 9" /><path d="M16 1.500q4.500 6.500 0 13" stroke="#a9b1ba" /></svg>
          <svg viewBox="0 0 20 16" width="20" height="16"><rect x="1" y="4" width="15.500" height="10.500" rx="2" fill="none" stroke="#1b1b1b" stroke-width="1.500" /><path d="M3.500 9 8 6h6.500v6.500h-11zM17.500 7H19q1 0 1 1v2.500q0 1-1 1h-1.500z" fill="#1b1b1b" /><path d="M4.500-.5 0 5.500h3L2 10l5-6H4.300z" fill="#1b1b1b" stroke="#e2edf7" stroke-width=".6" /></svg>
        </button>
        <button class="clock"><span>12:45 PM</span><span>3/6/2023</span></button>
        <span class="badge">1</span>
      </div>
    </footer>
  </div>
</template>

<style>
html,
body {
  margin: 0;
  overflow: hidden;
}
</style>

<style scoped>
* {
  box-sizing: border-box;
}

button {
  padding: 0;
  border: 0;
  background: none;
  font: inherit;
  color: inherit;
  cursor: pointer;
}

a {
  color: inherit;
  text-decoration: none;
}

svg {
  display: block;
  flex: none;
}

.screen {
  display: flex;
  flex-direction: column;
  height: 100vh;
  overflow: hidden;
  background: #fff;
  font-family: 'Open Sans', 'Noto Sans', sans-serif;
  font-size: 14px;
  color: #3c4043;
}

/* Browser */
.browser {
  flex: none;
  border-bottom: 1px solid #d5d7da;
}

.strip {
  display: flex;
  align-items: center;
  height: 43px;
  padding: 0 1px 0 12px;
  background: #dee1e6;
}

.tabs {
  display: flex;
  flex: 0 1 1572px;
  height: 43px;
}

.tab {
  position: relative;
  display: flex;
  flex: 1 1 0;
  align-items: center;
  gap: 9px;
  min-width: 0;
  padding: 0 6px 0 9px;
}

.tab:not(.active):not(.before)::after {
  content: '';
  position: absolute;
  right: 0;
  top: 9px;
  width: 1px;
  height: 25px;
  background: #8a8d91;
}

.tab.active {
  justify-content: space-between;
  border-radius: 10px 10px 0 0;
  background: #fff;
}

.tab.active::before,
.tab.active::after {
  content: '';
  position: absolute;
  bottom: 0;
  width: 10px;
  height: 10px;
}

.tab.active::before {
  right: 100%;
  background: radial-gradient(circle at 0 0, transparent 10px, #fff 10px);
}

.tab.active::after {
  left: 100%;
  background: radial-gradient(circle at 100% 0, transparent 10px, #fff 10px);
}

.close-tab {
  margin-right: 8px;
}

.favicon {
  width: 20px;
  height: 20px;
}

.tab-label {
  flex: 1;
  overflow: hidden;
  white-space: nowrap;
  line-height: 24px;
  -webkit-mask-image: linear-gradient(to right, #000 40%, transparent 95%);
  mask-image: linear-gradient(to right, #000 40%, transparent 95%);
}

.rtl .tab-label {
  margin-right: 3px;
  direction: rtl;
  -webkit-mask-image: linear-gradient(to left, #000 60%, transparent);
  mask-image: linear-gradient(to left, #000 60%, transparent);
}

.new-tab {
  display: grid;
  place-items: center;
  width: 54px;
  height: 43px;
}

.window-controls {
  display: flex;
  margin-left: auto;
}

.window-controls button {
  display: grid;
  place-items: center;
  width: 57px;
  height: 36px;
  margin-bottom: 6px;
}

.window-controls svg {
  fill: none;
  stroke: #1b1b1b;
  stroke-width: 1;
}

.toolbar {
  display: flex;
  align-items: center;
  height: 45px;
  padding: 0 9px 0 7px;
}

.tool {
  display: grid;
  place-items: center;
  width: 40px;
  height: 36px;
}

.omnibox {
  display: flex;
  flex: 1;
  align-items: center;
  gap: 12px;
  height: 35px;
  margin: 0 8px;
  padding: 0 12px 0 13px;
  border-radius: 18px;
  background: #f1f3f4;
}

.omnibox input {
  flex: 1;
  min-width: 0;
  height: 30px;
  padding: 0;
  border: 0;
  outline: 0;
  font: 17px 'Open Sans', 'Noto Sans', sans-serif;
  color: transparent;
  background: linear-gradient(to right, #202124 74px, #5f6368 74px);
  -webkit-background-clip: text;
  background-clip: text;
}

.omnibox button {
  margin-left: 8px;
}

.profile span {
  display: grid;
  place-items: center;
  width: 28px;
  height: 28px;
  border-radius: 50%;
  background: #00897b;
  color: #fff;
}

.more {
  width: 38px;
  height: 38px;
  border: 3px solid #1a73e8;
  border-radius: 50%;
}

.bookmarks {
  display: flex;
  gap: 19px;
  height: 40px;
  padding: 0 0 5px 18px;
}

.bookmarks a {
  display: flex;
  align-items: center;
  gap: 10px;
}

/* Page viewport */
.viewport {
  display: flex;
  flex: 1;
  min-height: 0;
}

.page {
  display: flex;
  flex: 1;
  flex-direction: column;
  min-width: 0;
  overflow: hidden;
}

.admin {
  position: relative;
  z-index: 1;
  flex: none;
  box-shadow: 0 2px 6px rgba(0, 0, 0, 0.5);
}

.admin-bar,
.admin-tray {
  display: flex;
  height: 49px;
}

.admin-bar {
  background: #0f0f0f;
  color: #fff;
  font-weight: 700;
}

.admin-tray {
  height: 50px;
  border-bottom: 1px solid #aaa;
  background: #fff;
  color: #565656;
}

.admin-bar a,
.admin-tray a {
  display: flex;
  align-items: center;
  gap: 10px;
  padding: 0 22px 0 11px;
}

.admin-bar svg,
.admin-tray a svg {
  width: 24px;
  height: 24px;
  fill: #bebebe;
}

.admin-bar .current {
  background: linear-gradient(#4a4a4a, #333);
}

.admin-bar .current svg {
  fill: #fff;
}

.admin-bar .edit {
  margin-left: auto;
}

.admin-tray a {
  padding-right: 24px;
  border-right: 1px solid #ddd;
}

.admin-tray a svg {
  fill: #787878;
  color: #787878;
}

.orientation {
  display: grid;
  place-items: center;
  width: 50px;
  margin-left: auto;
  border-left: 1px solid #c8c8c8;
  background: #f5f5f5;
}

.site {
  display: flex;
  flex: 1;
  min-height: 0;
}

.side {
  flex: none;
  width: 113px;
  background: #f7f9fb;
}

.burger {
  display: flex;
  flex-direction: column;
  align-items: center;
  justify-content: center;
  gap: 8px;
  width: 113px;
  height: 135px;
  background: #2494db;
}

.burger span {
  width: 45px;
  height: 3px;
  background: #fff;
}

.feed {
  flex: 1;
  min-width: 0;
  padding-left: 170px;
}

.post {
  display: flex;
}

.avatar {
  flex: none;
  width: 110px;
  padding-top: 53px;
}

.body {
  position: relative;
  flex: 0 1 885px;
  min-width: 0;
  font-family: Inter, sans-serif;
}

.quick-edit {
  position: absolute;
  top: 15px;
  right: 0;
  display: grid;
  place-items: center;
  width: 32px;
  height: 32px;
  border: 1px solid #ccc;
  border-radius: 50%;
  background: #fff;
}

.quick-edit svg {
  fill: #bebebe;
}

.byline {
  margin: 0;
  font-size: 18px;
  line-height: 36px;
  color: #6e7172;
}

.byline a {
  font-weight: 600;
  color: #0d77b5;
  text-decoration: underline;
  text-underline-offset: 3px;
}

h2 {
  margin: 22px 0 0;
  font-size: 44px;
  font-weight: 700;
  line-height: 54px;
  color: #0d1214;
}

.text {
  margin: 31px 0 0;
  font-family: 'Liberation Serif', serif;
  font-size: 26px;
  line-height: 45px;
  white-space: nowrap;
  color: #313637;
}

.tags {
  display: flex;
  align-items: center;
  gap: 13px;
  margin-top: 43px;
  font-size: 20px;
  font-weight: 700;
  line-height: 36px;
  color: #0d77b5;
}

.tags-label {
  margin-right: 16px;
  font-size: 16px;
  color: #6e7172;
}

hr {
  width: 68px;
  height: 2px;
  margin: 66px 0 60px;
  border: 0;
  background: #e7edf1;
}

.scrollbar {
  display: flex;
  flex: none;
  flex-direction: column;
  align-items: center;
  width: 21px;
  padding: 9px 0;
  background: #f1f1f1;
}

.arrow {
  border: 5px solid transparent;
}

.up {
  border-top: 0;
  border-bottom-color: #505050;
}

.down {
  margin-top: auto;
  border-bottom: 0;
  border-top-color: #505050;
}

.thumb {
  width: 17px;
  height: 45%;
  margin-top: 181px;
  background: #c1c1c1;
}

/* Taskbar */
.taskbar {
  display: grid;
  flex: none;
  grid-template-columns: 1fr auto 1fr;
  align-items: center;
  height: 60px;
  border-top: 1px solid #a9b3c2;
  background: linear-gradient(to right, #e2edf7 19%, #d2e2fa 24%, #d8daf2 31%, #d4e0f8 38%, #d9dcef 53%, #d8dff5 60%, #d3e1f8 68%, #dadced 75%, #e0eaf6 80%, #e2edf8);
  color: #1b1b1b;
}

.weather {
  display: flex;
  align-items: center;
  gap: 8px;
  padding: 0 0 2px 25px;
  line-height: 20px;
}

.weather div,
.clock {
  display: flex;
  flex-direction: column;
}

.condition {
  color: #555b61;
}

.dock {
  display: flex;
  align-items: center;
  gap: 5px;
}

.app {
  position: relative;
  display: grid;
  place-items: center;
  width: 50px;
  height: 50px;
  border-radius: 5px;
}

.app svg {
  width: 30px;
  height: 30px;
}

.app.open::after,
.app.current::after {
  content: '';
  position: absolute;
  bottom: 0;
  width: 8px;
  height: 4px;
  border-radius: 2px;
  background: #7c818c;
}

.app.current {
  background: #eaf0fb;
}

.app.current::after {
  width: 20px;
  background: #0078d4;
}

.search {
  display: flex;
  align-items: center;
  justify-content: center;
  gap: 6px;
  width: 123px;
  height: 38px;
  margin: 0 3px;
  border-radius: 19px;
  background: #f2f4fc;
}

.tray {
  display: flex;
  align-items: center;
  justify-content: flex-end;
  padding: 0 24px 2px 0;
}

.lang {
  margin: 0 23px 0 20px;
}

.status {
  display: flex;
  gap: 10px;
}

.clock {
  align-items: flex-end;
  margin: 0 10px 0 22px;
  line-height: 20px;
}

.badge {
  display: grid;
  place-items: center;
  width: 20px;
  height: 20px;
  border-radius: 50%;
  background: #0067c0;
  font-size: 12px;
  color: #fff;
}
</style>
